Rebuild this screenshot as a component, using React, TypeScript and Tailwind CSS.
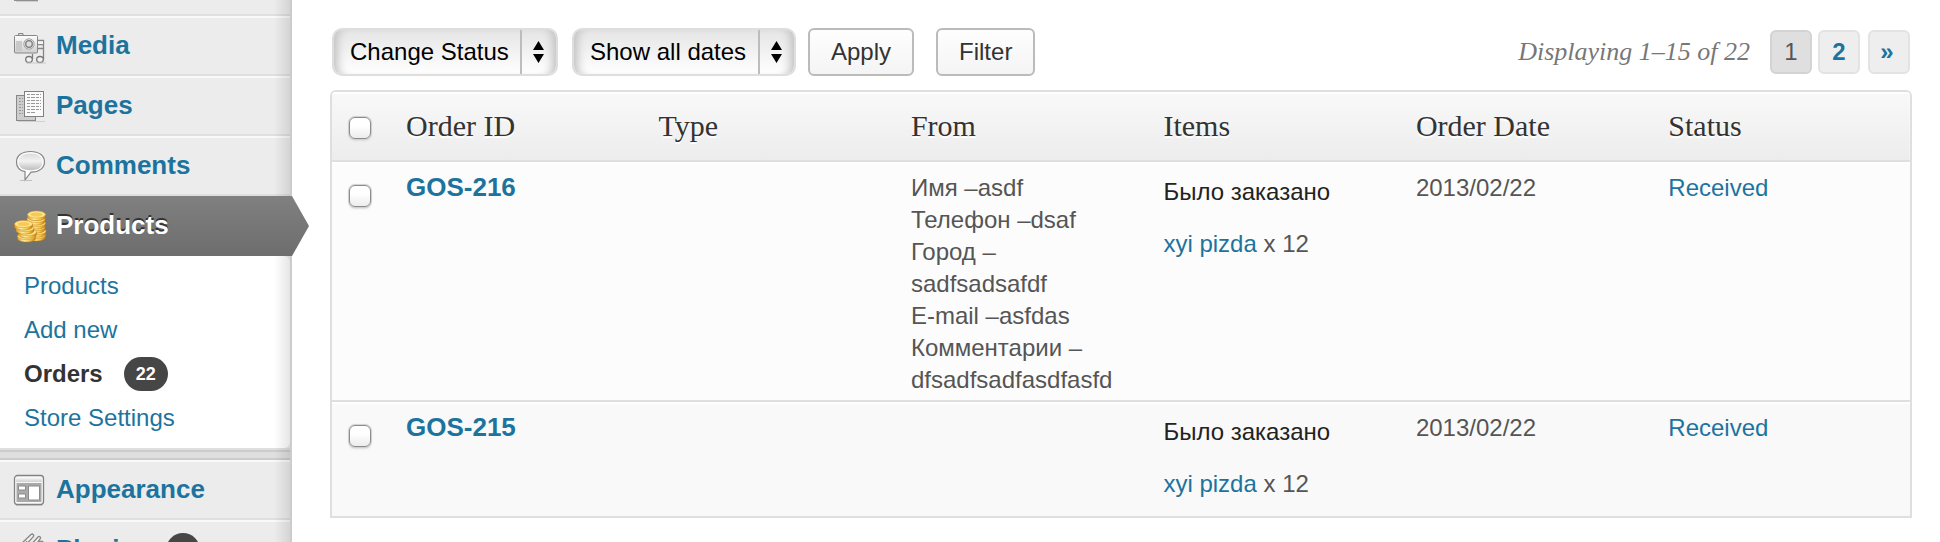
import React from "react";

type IconProps = { children: React.ReactNode };

function Icon({ children }: IconProps) {
  return (
    <svg aria-hidden="true" viewBox="0 0 32 32" className="size-8 shrink-0 overflow-visible" fill="none">
      <defs>
        <linearGradient id="silver" x1="0" y1="0" x2="0" y2="1">
          <stop offset="0" stopColor="#fdfdfd" />
          <stop offset="1" stopColor="#cfcfcf" />
        </linearGradient>
        <linearGradient id="bubble" x1="0" y1="0" x2="0" y2="1">
          <stop offset="0" stopColor="#dcdcdc" />
          <stop offset="0.45" stopColor="#f2f2f2" />
          <stop offset="1" stopColor="#bdbdbd" />
        </linearGradient>
        <linearGradient id="gold" x1="0" y1="0" x2="1" y2="0">
          <stop offset="0" stopColor="#dda02a" />
          <stop offset="0.35" stopColor="#ffeb9c" />
          <stop offset="0.7" stopColor="#f6c444" />
          <stop offset="1" stopColor="#bd7c14" />
        </linearGradient>
      </defs>
      {children}
    </svg>
  );
}

function MediaIcon() {
  return (
    <Icon>
      <path d="M18.500 24v5" stroke="#808080" strokeWidth="1.300" />
      <path d="M23 10.500h6.500v19M23 14.500h6M23 18.500h6" stroke="#868686" strokeWidth="1.300" />
      <path d="M24 11.500h5v2.500h-5z" fill="#f6f6f6" />
      <ellipse cx="15" cy="29.500" rx="3.300" ry="3" fill="#f2f2f2" stroke="#777" strokeWidth="1.300" />
      <ellipse cx="26" cy="29.500" rx="3.300" ry="3" fill="#f2f2f2" stroke="#777" strokeWidth="1.300" />
      <path d="M4.500 5.500V3.500h4.500v2" fill="#ddd" stroke="#888" />
      <rect x="0.500" y="5.500" width="23" height="17.500" rx="1" fill="url(#silver)" stroke="#868686" />
      <path d="M2 11h6v10H2z" fill="#c9c9c9" />
      <circle cx="15" cy="14" r="5.200" fill="#efefef" stroke="#a0a0a0" />
      <circle cx="15" cy="14" r="3.300" fill="#dcdcdc" stroke="#7a7a7a" strokeWidth="1.300" />
      <path d="M12 33h20" stroke="#c8c8c8" />
    </Icon>
  );
}

function PagesIcon() {
  return (
    <Icon>
      <rect x="2.500" y="5.500" width="19" height="25" fill="#cdcdcd" stroke="#888" />
      <path d="M5 8.500h4M5 11.500h4M5 14.500h4M5 17.500h4M5 20.500h4M5 23.500h4" stroke="#999" strokeDasharray="2 1" />
      <rect x="10.500" y="1.500" width="19" height="25" fill="#fafafa" stroke="#808080" />
      <path
        d="M13 4.500h14M13 7.500h14M13 10.500h14M13 13.500h14M13 16.500h14M13 19.500h14M13 22.500h9"
        stroke="#989898"
        strokeDasharray="3 1 4 1"
      />
      <path d="M4 31.500h27" stroke="#d0d0d0" />
    </Icon>
  );
}

function CommentsIcon() {
  return (
    <Icon>
      <path
        d="M16.500 1.500C8 1.500 2.500 5.500 2.500 12c0 5.500 3 8.500 8.500 9.700V30l6-7.800C25 22.300 30.500 18 30.500 12 30.500 5.500 25 1.500 16.500 1.500z"
        fill="#fdfdfd"
        stroke="#858585"
        strokeWidth="1.200"
      />
      <path
        d="M16.500 3.500C9 3.500 4.500 6.500 4.500 12c0 5 3.500 8.200 12 8.200S28.500 17 28.500 12c0-5.500-4.500-8.500-12-8.500z"
        fill="url(#bubble)"
      />
      <path d="M6 30.500h12" stroke="#c0c0c0" />
    </Icon>
  );
}

function Coin({ x, y }: { x: number; y: number }) {
  return (
    <g>
      <path
        d={`M${x - 9} ${y}v2.500c0 2 4 3.600 9 3.600s9-1.600 9-3.600v-2.500z`}
        fill="url(#gold)"
        stroke="#b5790f"
        strokeWidth="0.500"
      />
      <ellipse cx={x} cy={y} rx="9" ry="3.600" fill="#ffe38a" stroke="#cf952a" strokeWidth="0.500" />
      <ellipse cx={x} cy={y} rx="6" ry="2" fill="#f7c955" />
    </g>
  );
}

function ProductsIcon() {
  return (
    <Icon>
      <Coin x={22.500} y={25} />
      <Coin x={23} y={21} />
      <Coin x={22} y={17} />
      <Coin x={22.500} y={13} />
      <Coin x={22} y={9} />
      <Coin x={22.500} y={4.500} />
      <Coin x={12.500} y={26} />
      <Coin x={13.500} y={22} />
      <Coin x={11} y={18} />
      <Coin x={9.500} y={14} />
    </Icon>
  );
}

function AppearanceIcon() {
  return (
    <Icon>
      <rect x="0.500" y="1.500" width="29" height="29" rx="3" fill="#f8f8f8" stroke="#828282" strokeWidth="1.300" />
      <rect x="2" y="3" width="26" height="5" fill="url(#silver)" />
      <rect x="2.500" y="9" width="25" height="19" fill="#a9a9a9" />
      <path d="M4.500 12h7v4h-7zM4.500 20h7v4h-7zM14.500 12h11v14h-11z" fill="#fff" stroke="#8b8b8b" />
      <path d="M2 31.500h26" stroke="#bbb" />
    </Icon>
  );
}

function PluginsIcon() {
  return (
    <Icon>
      <path
        d="M5 12L17 0.500c1.500-1.200 3.500 0.500 2.300 2.200L10 13M14 14L24 3c1.300-1.400 3.200 0 2.200 1.700L19 15M9 13l4-6M23 10l3-2.500c2-1 4 0.500 3 2.500l-6 7"
        fill="#f2f2f2"
        stroke="#858585"
        strokeWidth="1.300"
      />
      <path d="M4 12h20v14H8z" fill="url(#silver)" stroke="#858585" />
    </Icon>
  );
}

function Badge({ children }: IconProps) {
  return (
    <span className="flex h-[34px] min-w-8 items-center justify-center rounded-[17px] bg-[#464646] px-3 text-lg leading-none font-bold text-white">
      {children}
    </span>
  );
}

function MenuItem({ icon, label, badge }: { icon: React.ReactNode; label: string; badge?: string }) {
  return (
    <li>
      <a
        href="#"
        className="flex h-[60px] items-center gap-[10px] border-t-2 border-b-2 border-t-[#f9f9f9] border-b-[#dfdfdf] pl-[14px] text-[26px] leading-8 font-bold text-[#1c749e]"
      >
        {icon}
        <span className="pb-0.5">{label}</span>
        {badge && (
          <span className="pl-1.5">
            <Badge>{badge}</Badge>
          </span>
        )}
      </a>
    </li>
  );
}

const submenu = [
  { label: "Products" },
  { label: "Add new" },
  { label: "Orders", count: "22" },
  { label: "Store Settings" },
];

function Sidebar() {
  return (
    <nav className="relative w-[292px] shrink-0 border-r-2 border-[#ccc] bg-[#ececec]">
      <div className="h-4 border-b-2 border-[#dfdfdf] pl-[14px]">
        <svg aria-hidden="true" viewBox="0 0 32 2" className="h-0.5 w-8">
          <path d="M0 0.500h24" stroke="#8f8f8f" />
          <path d="M2 1.500h22" stroke="#cfcfcf" />
        </svg>
      </div>
      <ul>
        <MenuItem icon={<MediaIcon />} label="Media" />
        <MenuItem icon={<PagesIcon />} label="Pages" />
        <MenuItem icon={<CommentsIcon />} label="Comments" />
        <li>
          <a
            href="#"
            className="relative z-10 -mr-0.5 flex h-[60px] items-center gap-[10px] bg-linear-to-b from-[#808080] to-[#6d6d6d] pl-[14px] text-[26px] leading-8 font-bold text-white [text-shadow:0_-2px_0_#333]"
          >
            <ProductsIcon />
            <span className="pb-0.5">Products</span>
            <span className="absolute top-0 left-full h-[60px] w-[17px] bg-linear-to-b from-[#808080] to-[#6d6d6d] [clip-path:polygon(0_0,100%_50%,0_100%)]" />
          </a>
          <ul className="rounded-r-md bg-white py-2">
            {submenu.map((item) => (
              <li key={item.label}>
                <a
                  href="#"
                  className={
                    item.count
                      ? "flex h-11 items-center gap-[21px] pl-6 text-2xl leading-8 font-bold text-[#333]"
                      : "flex h-11 items-center pl-6 text-2xl leading-8 text-[#1c749e]"
                  }
                >
                  {item.label}
                  {item.count && <Badge>{item.count}</Badge>}
                </a>
              </li>
            ))}
          </ul>
        </li>
        <li className="border-t-2 border-[#dfdfdf]">
          <div className="h-[10px] border-y-2 border-[#ccc] bg-[#dfdfdf]" />
        </li>
        <MenuItem icon={<AppearanceIcon />} label="Appearance" />
        <MenuItem icon={<PluginsIcon />} label="Plugins" badge="1" />
      </ul>
      <div className="pointer-events-none absolute inset-y-0 right-0 w-4 bg-linear-to-r from-transparent to-black/10" />
    </nav>
  );
}

function Picker({ label, options, width }: { label: string; options: string[]; width: string }) {
  return (
    <div className={`relative ${width}`}>
      <select
        aria-label={label}
        className="h-12 w-full appearance-none rounded-[10px] border-2 border-[#dedede] bg-linear-to-b from-[#e5e5e5] to-white pl-4 text-2xl leading-8 text-black shadow-[inset_10px_0_8px_-6px_#c4c4c4,inset_-10px_0_8px_-6px_#c4c4c4]"
      >
        {options.map((o) => (
          <option key={o}>{o}</option>
        ))}
      </select>
      <svg
        aria-hidden="true"
        viewBox="0 0 38 44"
        className="pointer-events-none absolute top-0.5 right-0 h-11 w-[38px]"
      >
        <path d="M1 0v44" stroke="#bdbdbd" strokeWidth="2" />
        <path d="M18.500 11l5.500 9H13zM18.500 33l5.500-9H13z" fill="#000" />
      </svg>
    </div>
  );
}

function Checkbox({ label }: { label: string }) {
  return (
    <input
      type="checkbox"
      aria-label={label}
      className="block size-[22px] appearance-none rounded-md border border-[#8c8c8c] bg-linear-to-b from-white from-40% to-[#ececec] shadow-[0_0_1px_1px_#cfcfcf,0_2px_2px_#ddd]"
    />
  );
}

const columns = ["Order ID", "Type", "From", "Items", "Order Date", "Status"];

const orders = [
  {
    id: "GOS-216",
    type: "",
    from: ["Имя –asdf", "Телефон –dsaf", "Город – sadfsadsafdf", "E-mail –asfdas", "Комментарии – dfsadfsadfasdfasfd"],
    item: "xyi pizda",
    quantity: 12,
    date: "2013/02/22",
    status: "Received",
  },
  {
    id: "GOS-215",
    type: "",
    from: [],
    item: "xyi pizda",
    quantity: 12,
    date: "2013/02/22",
    status: "Received",
  },
];

function OrdersTable() {
  return (
    <div className="overflow-hidden rounded-t-md border-2 border-[#dfdfdf]">
      <table className="w-full table-fixed border-separate border-spacing-0 text-left text-2xl leading-8 text-[#555]">
        <thead>
          <tr className="bg-linear-to-b from-[#f9f9f9] to-[#ececec]">
            <th className="h-[70px] w-[60px] border-t-2 border-b-2 border-t-white border-b-[#dfdfdf] pt-0.5 pl-[17px]">
              <Checkbox label="Select all orders" />
            </th>
            {columns.map((c) => (
              <th
                key={c}
                className="h-[70px] w-[16%] border-t-2 border-b-2 border-t-white border-b-[#dfdfdf] pb-0.5 pl-[14px] font-['Liberation_Serif',serif] text-[30px] leading-8 font-normal text-[#333] [text-shadow:0_2px_0_#fff] last:w-auto"
              >
                {c}
              </th>
            ))}
          </tr>
        </thead>
        <tbody className="[&_td]:border-t-2 [&_td]:border-t-white [&_td]:align-top [&>tr:first-child>td]:border-b-2 [&>tr:first-child>td]:border-b-[#dfdfdf]">
          {orders.map((o) => (
            <tr key={o.id} className="bg-[#fcfcfc] even:bg-[#f9f9f9]">
              <td className="pt-[21px] pl-[17px]">
                <Checkbox label={`Select ${o.id}`} />
              </td>
              <td className="pt-[7px] pl-[14px] text-[26px] font-bold">
                <a href="#" className="text-[#1c749e]">
                  {o.id}
                </a>
              </td>
              <td className="pt-2 pl-[14px]">{o.type}</td>
              <td className="pt-2 pr-[14px] pb-1 pl-[14px]">
                {o.from.map((line) => (
                  <div key={line}>{line}</div>
                ))}
              </td>
              <td className="pt-3 pb-4 pl-[14px]">
                <p className="mb-5 text-[#222]">Было заказано</p>
                <p>
                  <a href="#" className="text-[#1c749e]">
                    {o.item}
                  </a>{" "}
                  x {o.quantity}
                </p>
              </td>
              <td className="pt-2 pl-[14px]">{o.date}</td>
              <td className="pt-2 pl-[14px]">
                <a href="#" className="text-[#1c749e]">
                  {o.status}
                </a>
              </td>
            </tr>
          ))}
        </tbody>
      </table>
    </div>
  );
}

function Toolbar() {
  const button =
    "h-12 rounded-md border-2 border-[#bbb] bg-linear-to-b from-[#fefefe] to-[#f4f4f4] px-[21px] text-2xl leading-8 text-[#333]";
  const page = "flex h-11 w-[42px] items-center justify-center rounded-md border-2";
  return (
    <div className="flex items-center justify-between pr-0.5 pl-0.5">
      <div className="flex items-center">
        <Picker label="Change status" width="mr-[14px] w-[226px]" options={["Change Status", "Received", "Shipped"]} />
        <Picker label="Filter by date" width="mr-3 w-[224px]" options={["Show all dates", "February 2013"]} />
        <button type="button" className={`${button} mr-[22px]`}>
          Apply
        </button>
        <button type="button" className={button}>
          Filter
        </button>
      </div>
      <div className="flex items-center text-2xl leading-8">
        <span className="mr-5 font-['Liberation_Serif',serif] text-[26px] text-[#777] italic">
          Displaying 1–15 of 22
        </span>
        <span className={`${page} mr-1.5 border-[#d3d3d3] bg-[#dfdfdf] text-[#555]`}>1</span>
        <a href="#" className={`${page} mr-2 border-[#e3e3e3] bg-[#eee] font-bold text-[#1c749e]`}>
          2
        </a>
        <a href="#" className={`${page} border-[#e3e3e3] bg-[#eee] pr-1 font-bold text-[#1c749e]`}>
          »
        </a>
      </div>
    </div>
  );
}

export default function App() {
  return (
    <div className="flex h-screen items-start overflow-hidden bg-white font-['Liberation_Sans',Arial,sans-serif]">
      <Sidebar />
      <main className="flex min-w-0 flex-1 flex-col gap-[14px] pt-7 pr-7 pl-[38px]">
        <Toolbar />
        <OrdersTable />
      </main>
    </div>
  );
}
